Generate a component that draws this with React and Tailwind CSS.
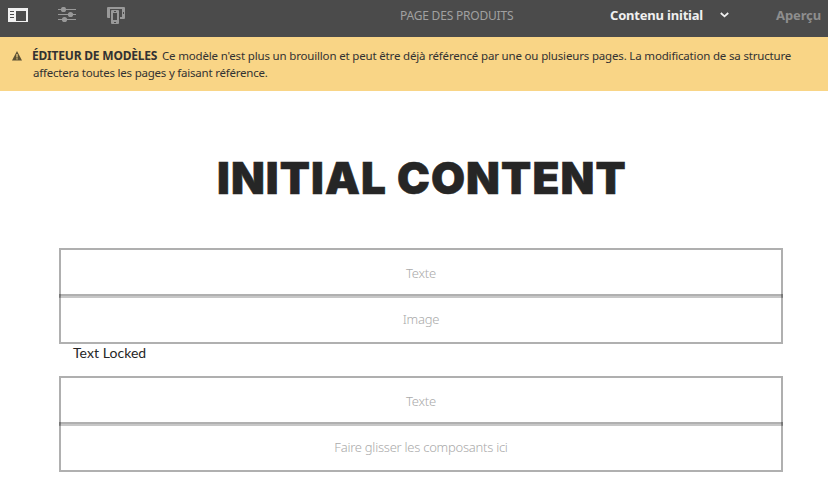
function SidePanelIcon() {
  return (
    <svg width="20" height="15" viewBox="0 0 20 15" fill="none" shapeRendering="crispEdges">
      <path fill="#f0f0f0" fillRule="evenodd" d="M0 0H20V14H0ZM8 3H18V13H8Z" />
      <path fill="#4b4b4b" d="M2 3h4v1H2zM2 6h4v1H2zM2 9h4v1H2z" />
    </svg>
  );
}

function SlidersIcon() {
  return (
    <svg width="20" height="16" viewBox="0 0 20 16" fill="#999999">
      <path d="M1 2h18v1H1zM1 7h18v1H1zM1 12h18v1H1z" />
      <circle cx="6.5" cy="2.5" r="2.6" />
      <circle cx="13.5" cy="7.5" r="2.6" />
      <circle cx="7.5" cy="12.5" r="2.6" />
    </svg>
  );
}

function DevicesIcon() {
  return (
    <svg width="19" height="18" viewBox="0 0 19 18" fill="#999999">
      <path d="M1 0H17Q18 0 18 1V11Q18 12 17 12H13V10H15V2H3V11H1Q0 11 0 10V1Q0 0 1 0Z" />
      <path d="M16 5h1v2h-1z" fill="#4b4b4b" />
      <rect x="4" y="3" width="8" height="14" rx="1" />
      <path d="M6 6h4v7H6zM7 4h2v1H7zM7 15h2v1H7z" fill="#4b4b4b" />
    </svg>
  );
}

function DropZone({ first, second }) {
  return (
    <div className="flex w-[724px] flex-col text-[13px] font-light text-[#aaaaaa]">
      <div className="flex h-[50px] items-center justify-center border-2 border-black/31 border-b-black/22 pt-[2px] tracking-[-0.2px]">{first}</div>
      <div className="-mt-1 flex h-[50px] items-center justify-center border-2 border-black/31 pt-[2px] tracking-[-0.25px]">{second}</div>
    </div>
  );
}

export default function App() {
  return (
    <div className="h-[496px] w-[828px] overflow-hidden bg-white font-['Noto_Sans','Open_Sans',sans-serif]">
      <header className="flex h-[37px] bg-[#4b4b4b]">
        <div className="flex w-[400px] items-start pl-2">
          <div className="w-[49px] pt-2"><SidePanelIcon /></div>
          <div className="w-[50px] pt-[7px]"><SlidersIcon /></div>
          <div className="pt-[7px]"><DevicesIcon /></div>
        </div>
        <div className="w-[210px] pt-[7px] text-[12px] leading-[18px] tracking-[-0.2px] whitespace-nowrap text-[#a0a0a0]">PAGE DES PRODUITS</div>
        <div className="w-[110px] pt-[6px] text-[13px] leading-[18px] font-bold tracking-[-0.2px] whitespace-nowrap text-[#f0f0f0]">Contenu initial</div>
        <div className="w-[56px] pt-[12px]">
          <svg width="9" height="6" viewBox="0 0 9 6" fill="none" stroke="#f0f0f0" strokeWidth="1.8"><path d="M.8 1L4.500 4.400L8.200 1" /></svg>
        </div>
        <div className="pt-[6px] text-[13px] leading-[18px] font-bold tracking-[-0.1px] whitespace-nowrap text-[#8e8e8e]">Aperçu</div>
      </header>

      <section className="flex h-[54px] bg-[#f9d586] text-[11.5px] leading-[17px] text-[#323232]">
        <div className="w-[32px] shrink-0 pt-[14px] pl-3">
          <svg width="10" height="10" viewBox="0 0 10 10">
            <path d="M5 0L10 9.500H0Z" fill="#5b5033" />
            <path d="M4.400 3h1.200v3.500H4.400zM4.400 7.300h1.200v1.200H4.400z" fill="#f9d586" />
          </svg>
        </div>
        <div className="pt-[10px] whitespace-nowrap">
          <div className="flex">
            <strong className="w-[130px] text-[12px] font-bold tracking-[-0.2px]">ÉDITEUR DE MODÈLES</strong>
            <span className="tracking-[-0.17px]">Ce modèle n'est plus un brouillon et peut être déjà référencé par une ou plusieurs pages. La modification de sa structure</span>
          </div>
          <div className="pl-px tracking-[-0.22px]">affectera toutes les pages y faisant référence.</div>
        </div>
      </section>

      <main className="flex flex-col pl-[59px]">
        <h1 className="h-[157px] pt-[62px] pl-[158px] font-['Inter',sans-serif] text-[44px] leading-[50px] font-black tracking-[1.1px] whitespace-nowrap text-[#262626] [-webkit-text-stroke:0.6px_#262626]">INITIAL CONTENT</h1>
        <DropZone first="Texte" second="Image" />
        <p className="h-8 pl-[14px] font-[Lato,sans-serif] text-[14px] leading-[18px] tracking-[0.05px] text-[#262626]">Text Locked</p>
        <DropZone first="Texte" second="Faire glisser les composants ici" />
      </main>
    </div>
  );
}
